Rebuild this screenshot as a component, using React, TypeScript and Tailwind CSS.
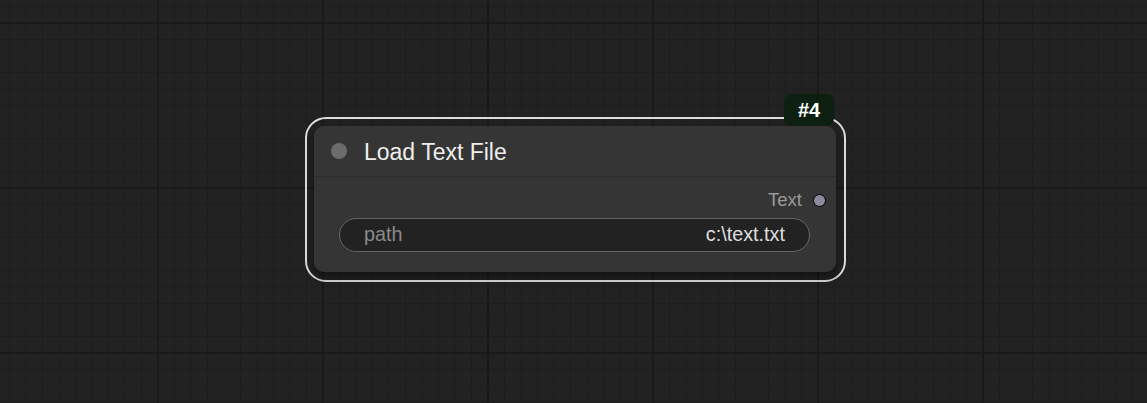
import React from "react";

const font = { fontFamily: '"Liberation Sans", Arial, sans-serif' };

function NodeCard() {
  return (
    <div className="absolute left-[305px] top-[117px] h-[165px] w-[541px] rounded-[21px] border-2 border-[#dcdcdc]">
      {/* id badge */}
      <div className="absolute left-[477px] top-[-25px] z-10 flex h-[32px] w-[50px] items-center justify-center rounded-[8px] bg-[#0d1f10] text-[20px] font-bold text-white">
        #4
      </div>

      <div className="absolute left-[7px] top-[7px] flex h-[146px] w-[522px] flex-col rounded-[10px] bg-[#353535] shadow-[0_5px_10px_rgba(0,0,0,0.45)]">
        <div className="flex h-[51px] items-center gap-[17px] border-b border-[#2b2b2b] pl-[17px]">
          <span className="h-[16px] w-[16px] rounded-full bg-[#6c6c6c]" />
          <span className="pt-[2px] text-[23px] text-[#eeeeee]">Load Text File</span>
        </div>

        <div className="flex flex-col pt-[11px]">
          <div className="flex h-[24px] items-center justify-end gap-[11px] pr-[10px]">
            <span className="text-[18.5px] text-[#9a9a9a]">Text</span>
            <span className="h-[13px] w-[13px] rounded-full border-[1.5px] border-black bg-[#8b8a9e]" />
          </div>

          <div className="ml-[25px] mr-[26px] mt-[6px] flex h-[34px] items-center justify-between rounded-full border border-[#666666] bg-[#222222] px-[24px] text-[19.8px]">
            <span className="text-[#8a8a8a]">path</span>
            <span className="text-[#dddddd]">c:\text.txt</span>
          </div>
        </div>
      </div>
    </div>
  );
}

export default function App() {
  return (
    <div
      style={font}
      className="relative h-[403px] w-[1147px] overflow-hidden bg-[#222222] [background-image:linear-gradient(#191919_2px,transparent_2px),linear-gradient(90deg,#191919_2px,transparent_2px),linear-gradient(#1d1d1d_1px,transparent_1px),linear-gradient(90deg,#1d1d1d_1px,transparent_1px)] [background-size:165px_165px,165px_165px,16.5px_16.5px,16.5px_16.5px] [background-position:0_22px,157px_0,0_6px,9px_0]"
    >
      <NodeCard />
    </div>
  );
}
